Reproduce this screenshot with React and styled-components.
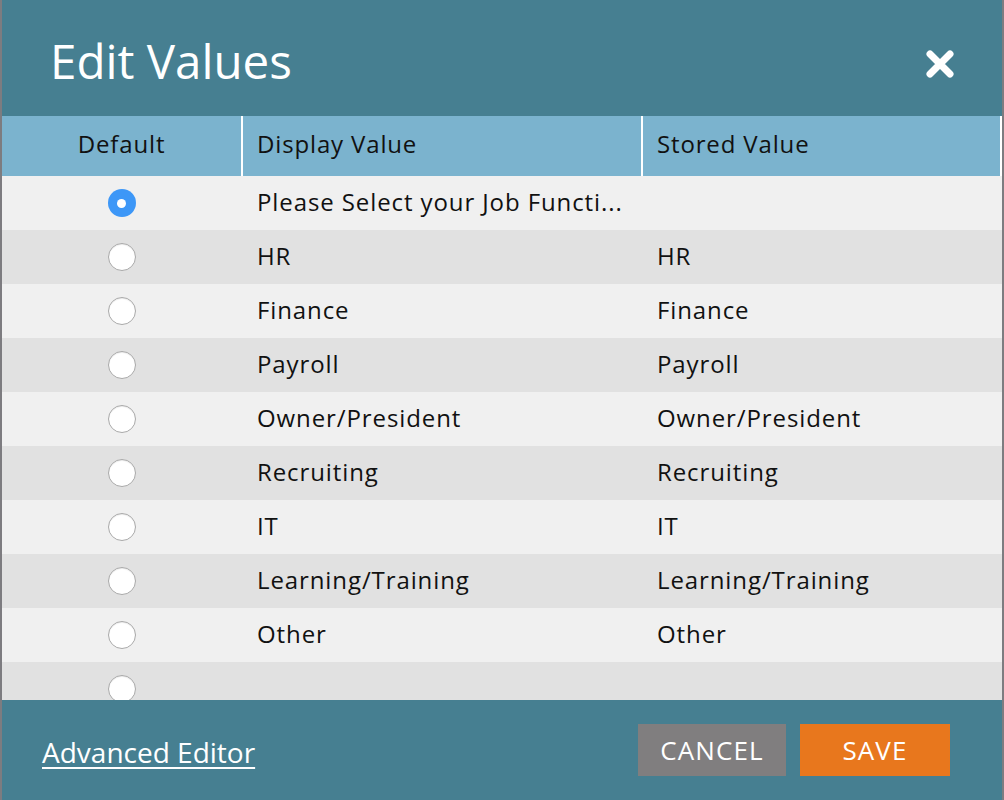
import React from "react";
import styled, { createGlobalStyle } from "styled-components";

const Global = createGlobalStyle`
  html, body { margin: 0; padding: 0; }
  body {
    background: #7d7c80;
    font-family: "Open Sans", "Liberation Sans", sans-serif;
    width: 1004px;
    height: 800px;
    overflow: hidden;
  }
`;

const Dialog = styled.div`
  margin: 0 2px;
  width: 1000px;
  height: 800px;
  display: flex;
  flex-direction: column;
  background: #467f91;
`;

const Header = styled.header`
  height: 116px;
  flex: none;
  display: flex;
  align-items: center;
  justify-content: space-between;
  padding: 0 46px 0 48px;
  box-sizing: border-box;
`;

const Title = styled.h1`
  margin: 0;
  font-size: 47.5px;
  font-weight: 400;
  color: #fff;
  line-height: 1;
  transform: translateY(3px);
`;

const CloseButton = styled.button`
  border: 0;
  background: none;
  padding: 0;
  width: 32px;
  height: 32px;
  display: flex;
  align-items: center;
  justify-content: center;
  cursor: pointer;
  transform: translateY(6px);
`;

const cols = "239px 398px 1fr";

const HeadRow = styled.div`
  display: grid;
  grid-template-columns: ${cols};
  column-gap: 2px;
  background: #fff;
  border-right: 2px solid #fff;
  height: 60px;
  flex: none;
`;

const HeadCell = styled.div`
  background: #7bb3ce;
  display: flex;
  align-items: center;
  justify-content: ${(p) => (p.$center ? "center" : "flex-start")};
  padding-left: ${(p) => (p.$center ? "0" : "14px")};
  padding-bottom: 5px;
  box-sizing: border-box;
  font-size: 24px;
  letter-spacing: 0.85px;
  color: #111;
`;

const Body = styled.div`
  flex: 1;
  overflow: hidden;
`;

const Row = styled.div`
  display: grid;
  grid-template-columns: ${cols};
  column-gap: 2px;
  height: 54px;
  background: ${(p) => (p.$alt ? "#e1e1e1" : "#f0f0f0")};
`;

const Cell = styled.div`
  display: flex;
  align-items: center;
  justify-content: ${(p) => (p.$center ? "center" : "flex-start")};
  padding-left: ${(p) => (p.$center ? "0" : "14px")};
  padding-bottom: ${(p) => (p.$center ? "0" : "4px")};
  box-sizing: border-box;
  font-size: 24px;
  letter-spacing: 0.9px;
  color: #111;
  white-space: nowrap;
  overflow: hidden;
`;

const Radio = styled.span`
  width: 28px;
  height: 28px;
  border-radius: 50%;
  box-sizing: border-box;
  display: flex;
  align-items: center;
  justify-content: center;
  background: ${(p) => (p.$checked ? "#3d97f7" : "#fff")};
  border: ${(p) => (p.$checked ? "none" : "1.5px solid #a9a9a9")};
  box-shadow: ${(p) => (p.$checked ? "none" : "inset 0 1px 1px rgba(0,0,0,0.08)")};
  &::after {
    content: "";
    display: ${(p) => (p.$checked ? "block" : "none")};
    width: 9px;
    height: 9px;
    border-radius: 50%;
    background: #fff;
  }
`;

const Footer = styled.footer`
  height: 100px;
  flex: none;
  display: flex;
  align-items: center;
  justify-content: space-between;
  padding: 0 52px 0 40px;
  box-sizing: border-box;
`;

const LinkText = styled.a`
  font-size: 28px;
  color: #fff;
  text-decoration: underline;
  text-decoration-thickness: 2px;
  text-underline-offset: 4px;
  cursor: pointer;
  transform: translateY(2px);
`;

const Buttons = styled.div`
  display: flex;
  gap: 14px;
`;

const Btn = styled.button`
  border: 0;
  height: 52px;
  width: ${(p) => p.$w}px;
  background: ${(p) => p.$bg};
  color: #fff;
  font-family: "Open Sans", "Liberation Sans", sans-serif;
  font-size: 26px;
  letter-spacing: 1.1px;
  text-transform: uppercase;
  padding: 0;
  cursor: pointer;
`;

const rows = [
  ["Please Select your Job Functi...", "", true],
  ["HR", "HR"],
  ["Finance", "Finance"],
  ["Payroll", "Payroll"],
  ["Owner/President", "Owner/President"],
  ["Recruiting", "Recruiting"],
  ["IT", "IT"],
  ["Learning/Training", "Learning/Training"],
  ["Other", "Other"],
  ["", ""],
];

export default function App() {
  return (
    <>
      <Global />
      <Dialog>
        <Header>
          <Title>Edit Values</Title>
          <CloseButton aria-label="Close">
            <svg width="30" height="30" viewBox="0 0 30 30">
              <path
                d="M5 5 L25 25 M25 5 L5 25"
                stroke="#fff"
                strokeWidth="7"
                strokeLinecap="round"
              />
            </svg>
          </CloseButton>
        </Header>
        <HeadRow>
          <HeadCell $center>Default</HeadCell>
          <HeadCell>Display Value</HeadCell>
          <HeadCell>Stored Value</HeadCell>
        </HeadRow>
        <Body>
          {rows.map(([d, s, checked], i) => (
            <Row key={i} $alt={i % 2 === 1}>
              <Cell $center>
                <Radio $checked={!!checked} />
              </Cell>
              <Cell>{d}</Cell>
              <Cell>{s}</Cell>
            </Row>
          ))}
        </Body>
        <Footer>
          <LinkText>Advanced Editor</LinkText>
          <Buttons>
            <Btn $w={148} $bg="#807e7f">Cancel</Btn>
            <Btn $w={150} $bg="#e8771d">Save</Btn>
          </Buttons>
        </Footer>
      </Dialog>
    </>
  );
}
